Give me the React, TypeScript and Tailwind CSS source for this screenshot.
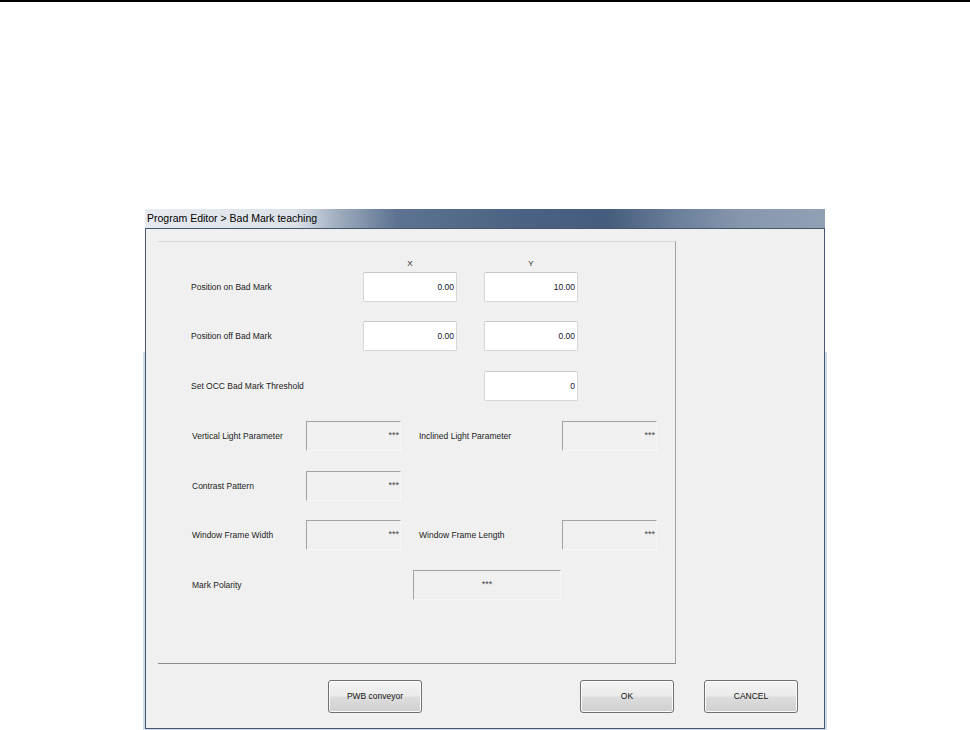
import React from 'react';

function ValueBox({ value }: { value: string }) {
  return (
    <div className="w-[94px] h-full bg-white border border-[#d6d6d6] border-t-[#c8c8c8] rounded-[2px] flex items-center justify-end pr-[2px] text-[8.5px] text-[#14142a]">
      {value}
    </div>
  );
}

function ReadBox({ wide = false }: { wide?: boolean }) {
  return (
    <div
      className={
        wide
          ? 'w-[148px] h-full border-t border-l border-[#a3a3a3] border-r border-b border-r-[#f7f7f7] border-b-[#f7f7f7] flex items-center justify-center text-[9px] text-[#444]'
          : 'w-[95px] h-full border-t border-l border-[#a3a3a3] border-r border-b border-r-[#f7f7f7] border-b-[#f7f7f7] flex items-center justify-end pr-[1px] text-[9px] text-[#444]'
      }
    >
      ***
    </div>
  );
}

function WinButton({ label, ml }: { label: string; ml: string }) {
  return (
    <button
      className={`${ml} w-[94px] h-[33px] rounded-[3px] border border-[#707070] shadow-[inset_0_0_0_1px_#fbfbfb] bg-[linear-gradient(to_bottom,#f3f3f3_0%,#ebebeb_48%,#dddddd_52%,#cfcfcf_100%)] text-[8.5px] text-[#111] flex items-center justify-center`}
    >
      {label}
    </button>
  );
}

export default function App() {
  return (
    <div className="w-[970px] h-[730px] bg-white flex flex-col overflow-hidden font-['Liberation_Sans',Arial,sans-serif]">
      <div className="h-[2px] bg-black" />

      <div className="mt-[207px] ml-[143px] w-[684px] flex flex-1">
        {/* left frame edge */}
        <div className="w-[2px] flex flex-col">
          <div className="h-[143px] bg-white" />
          <div className="flex-1 bg-[#cfdcec]" />
        </div>

        <div className="w-[680px] flex flex-col">
          <div className="h-[19px] flex items-center pl-[2px] text-[10.5px] text-black bg-[linear-gradient(to_right,#e6eaef_0%,#dde2e9_22%,#9aa8bb_29%,#5d7391_37%,#4b6282_55%,#455c7c_68%,#6b7f9a_78%,#8797ad_88%,#91a0b5_100%)]">
            Program Editor &gt; Bad Mark teaching
          </div>

          <div className="h-[501px] border border-[#45576e] bg-[#f0f0f0] flex flex-col">
            {/* group panel */}
            <div className="mt-[12px] ml-[12px] w-[518px] h-[423px] border-t border-t-[#d8d8d8] border-r border-r-[#a0a0a0] border-b border-b-[#8c8c8c] flex flex-col text-[8.5px] text-[#1c1c1c]">
              <div className="mt-[16px] h-[12px] flex items-center text-[8px]">
                <div className="w-[205px]" />
                <div className="w-[94px] text-center">X</div>
                <div className="ml-[27px] w-[94px] text-center">Y</div>
              </div>

              <div className="mt-[2px] h-[30px] flex items-center">
                <div className="w-[205px] pl-[33px]">Position on Bad Mark</div>
                <ValueBox value="0.00" />
                <div className="w-[27px]" />
                <ValueBox value="10.00" />
              </div>

              <div className="mt-[19px] h-[30px] flex items-center">
                <div className="w-[205px] pl-[33px]">Position off Bad Mark</div>
                <ValueBox value="0.00" />
                <div className="w-[27px]" />
                <ValueBox value="0.00" />
              </div>

              <div className="mt-[20px] h-[30px] flex items-center">
                <div className="w-[326px] pl-[33px]">Set OCC Bad Mark Threshold</div>
                <ValueBox value="0" />
              </div>

              <div className="mt-[20px] h-[30px] flex items-center">
                <div className="w-[148px] pl-[34px]">Vertical Light Parameter</div>
                <ReadBox />
                <div className="w-[161px] pl-[18px]">Inclined Light Parameter</div>
                <ReadBox />
              </div>

              <div className="mt-[20px] h-[30px] flex items-center">
                <div className="w-[148px] pl-[34px]">Contrast Pattern</div>
                <ReadBox />
              </div>

              <div className="mt-[19px] h-[30px] flex items-center">
                <div className="w-[148px] pl-[34px]">Window Frame Width</div>
                <ReadBox />
                <div className="w-[161px] pl-[18px]">Window Frame Length</div>
                <ReadBox />
              </div>

              <div className="mt-[20px] h-[30px] flex items-center">
                <div className="w-[255px] pl-[34px]">Mark Polarity</div>
                <ReadBox wide />
              </div>
            </div>

            <div className="mt-[16px] flex">
              <WinButton label="PWB conveyor" ml="ml-[182px]" />
              <WinButton label="OK" ml="ml-[158px]" />
              <WinButton label="CANCEL" ml="ml-[30px]" />
            </div>
          </div>

          <div className="h-[1px] bg-[#cfdcec]" />
        </div>

        {/* right frame edge */}
        <div className="w-[2px] flex flex-col">
          <div className="h-[143px] bg-white" />
          <div className="flex-1 bg-[#cfdcec]" />
        </div>
      </div>
    </div>
  );
}
